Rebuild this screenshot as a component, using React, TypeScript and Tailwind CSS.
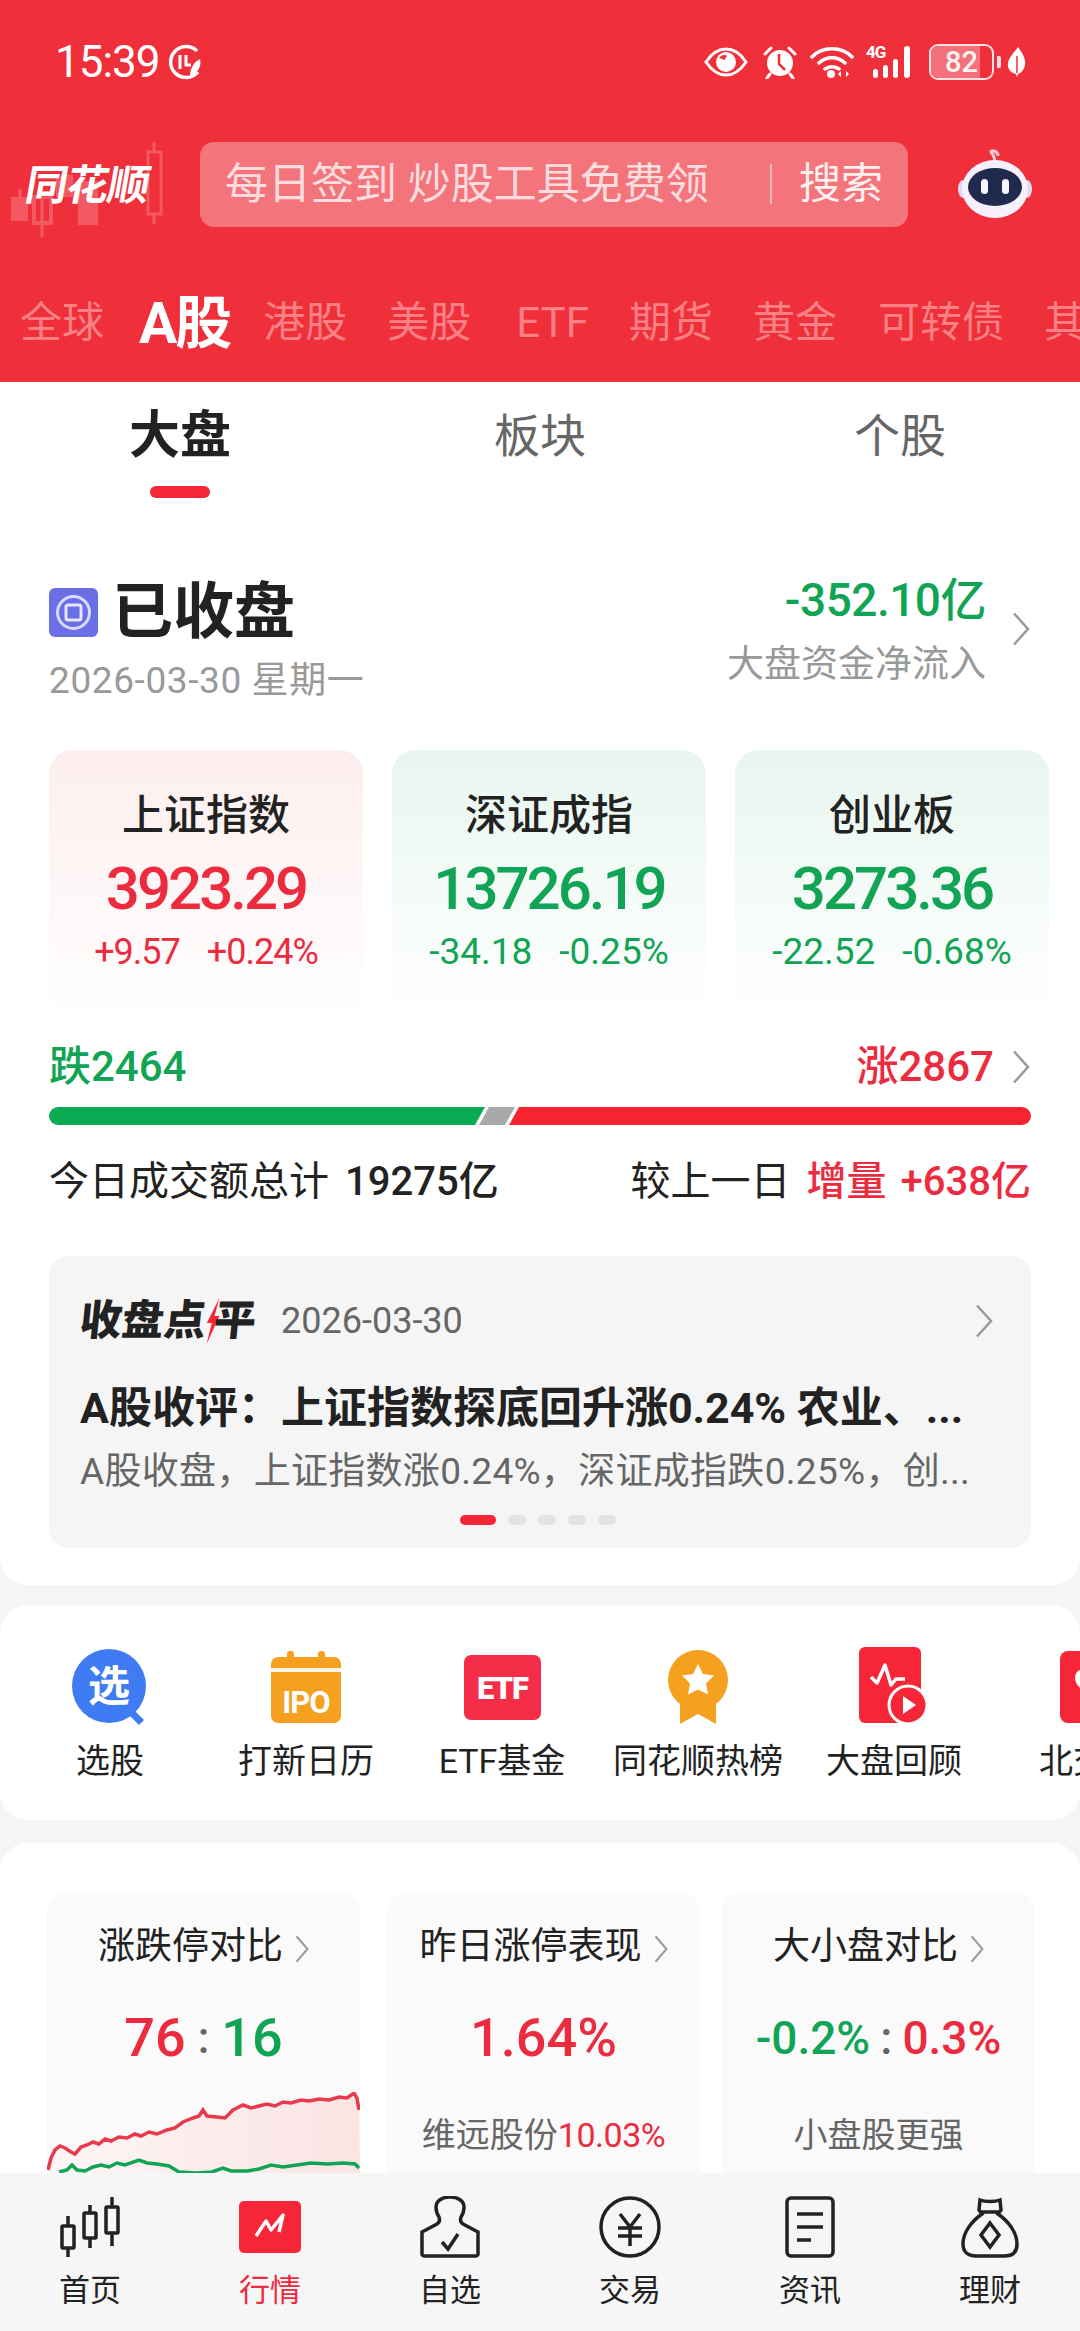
import React from "react";

const RED = "text-[#ec2b3f]";
const GREEN = "text-[#11a455]";

const marketTabs = [
  { label: "港股", cls: "" },
  { label: "美股", cls: "ml-[40px]" },
  { label: "ETF", cls: "ml-[45px]" },
  { label: "期货", cls: "ml-[40px]" },
  { label: "黄金", cls: "ml-[40px]" },
  { label: "可转债", cls: "ml-[41px]" },
  { label: "其他", cls: "ml-[40px]" },
];

const indexes = [
  { name: "上证指数", value: "3923.29", diff: "+9.57", pct: "+0.24%", up: true },
  { name: "深证成指", value: "13726.19", diff: "-34.18", pct: "-0.25%", up: false },
  { name: "创业板", value: "3273.36", diff: "-22.52", pct: "-0.68%", up: false },
];

// 截图里的箭头偏瘦偏高，lucide 的太宽，自己画
function Chevron({ w = 18, h = 34, className = "" }: { w?: number; h?: number; className?: string }) {
  return (
    <svg width={w} height={h} viewBox="0 0 18 34" preserveAspectRatio="none" fill="none" className={className}>
      <path d="M2 1.500 16 17 2 32.500" stroke="#9a9a9a" strokeWidth="2.500" />
    </svg>
  );
}

function Eye() {
  return (
    <svg width="44" height="30" viewBox="0 0 44 30" fill="none">
      <path d="M2 15C8 6 15 2 22 2s14 4 20 13c-6 9-13 13-20 13S8 24 2 15Z" stroke="#fff" strokeWidth="3" />
      <circle cx="22" cy="15" r="10" fill="#fff" />
      <path d="M15 11c2-3 6-4 8-2-1 1-2 2-2 4-2-1-4-1-6-2Z" fill="#ef2f3a" />
    </svg>
  );
}

function Alarm() {
  return (
    <svg width="36" height="34" viewBox="0 0 36 34" fill="none">
      <circle cx="18" cy="18" r="13" fill="#fff" />
      <path d="M3 9 9 3M33 9l-6-6M8 29l-3 4M28 29l3 4" stroke="#fff" strokeWidth="3" strokeLinecap="round" />
      <path d="M17 9v10l6 6" stroke="#ef2f3a" strokeWidth="2.500" />
    </svg>
  );
}

function Wifi() {
  return (
    <svg width="44" height="32" viewBox="0 0 44 32" fill="none">
      <path d="M2 11C12 0 32 0 42 11M9 17c7-7 19-7 26 0M15 23c4-3 10-3 14 0" stroke="#fff" strokeWidth="3.500" strokeLinecap="round" />
      <circle cx="21" cy="28" r="4" fill="#fff" />
      <path d="M31 25v6l-3-3ZM36 25v6l3-3Z" fill="#fff" />
    </svg>
  );
}

function Signal() {
  return (
    <div className="relative h-[34px] w-[50px]">
      <svg width="50" height="34" viewBox="0 0 50 34" fill="#fff">
        <rect x="7" y="24" width="5" height="9" rx="2.500" />
        <rect x="17" y="20" width="5" height="13" rx="2.500" />
        <rect x="27" y="14" width="5" height="19" rx="2.500" />
        <rect x="38" y="1" width="6" height="32" rx="3" />
      </svg>
      <span className="absolute left-0 top-[-3px] text-[17px] font-bold leading-[20px] tracking-[-1px] text-white">4G</span>
    </div>
  );
}

function Battery() {
  return (
    <div className="flex items-center gap-[3px]">
      <div className="relative flex h-[36px] w-[65px] items-center justify-center overflow-hidden rounded-[9px] border-[2px] border-[#fde3e4]">
        <div className="absolute inset-y-0 left-0 w-[80%] bg-[#f4707a]" />
        <span className="relative text-[29px] font-medium leading-none text-[#fff3f3]">82</span>
      </div>
      <div className="h-[12px] w-[4px] rounded-r-[2px] bg-[#fde3e4]" />
    </div>
  );
}

function Leaf() {
  return (
    <svg width="19" height="30" viewBox="0 0 19 30" fill="#fff" className="ml-[6px]">
      <path d="M11 0c5 7 8 12 7 18-1 5-4 8-7 9l-1 3-1-3C4 26 0 22 1 16 2 10 7 6 11 0Z" />
      <path d="M10 9v17" stroke="#ef2f3a" strokeWidth="1.500" />
    </svg>
  );
}

function Robot() {
  return (
    <svg width="76" height="70" viewBox="0 0 76 70" fill="none">
      <path d="M38 12c-1-5-2-8-5-9M33 3c3-3 8 0 8 4" stroke="#f7c9d3" strokeWidth="3" fill="none" />
      <ellipse cx="6" cy="40" rx="5" ry="9" fill="#dcd8f5" />
      <ellipse cx="70" cy="40" rx="5" ry="9" fill="#dcd8f5" />
      <ellipse cx="38" cy="40" rx="33" ry="29" fill="#f5f0fb" />
      <ellipse cx="38" cy="38" rx="27" ry="19" fill="#1f2a4d" />
      <rect x="24" y="30" width="7" height="15" rx="3.500" fill="#f5f5fb" />
      <rect x="45" y="30" width="7" height="15" rx="3.500" fill="#f5f5fb" />
    </svg>
  );
}

function Logo() {
  return (
    <div className="relative h-[120px] w-[188px] shrink-0">
      <svg width="188" height="120" viewBox="0 0 188 120" fill="none" className="absolute left-0 top-0 opacity-20">
        <rect x="11" y="72" width="17" height="24" fill="#fff" />
        <path d="M20 64v8M42 62v50" stroke="#fff" strokeWidth="3" />
        <rect x="34" y="72" width="17" height="26" stroke="#fff" strokeWidth="4" />
        <rect x="56" y="50" width="17" height="22" fill="#fff" />
        <rect x="78" y="56" width="20" height="44" fill="#fff" />
        <rect x="148" y="27" width="13" height="62" stroke="#fff" strokeWidth="3" />
        <path d="M154 17v10M154 89v10" stroke="#fff" strokeWidth="3" />
      </svg>
      <div className="absolute left-[26px] top-[37px] skew-x-[-10deg] text-[42px] font-bold leading-[48px] tracking-[-1px] text-white">同花顺</div>
    </div>
  );
}

function XuanIcon() {
  return (
    <svg width="76" height="78" viewBox="0 0 76 78">
      <path d="M58 58l14 14-5 5-14-14Z" fill="#3f7cf4" />
      <circle cx="37" cy="38" r="37" fill="#3f7cf4" />
      <text x="37" y="53" textAnchor="middle" fontSize="42" fontWeight="700" fill="#fff" fontFamily="'Noto Sans CJK SC', sans-serif">选</text>
    </svg>
  );
}

function IpoIcon() {
  return (
    <svg width="70" height="72" viewBox="0 0 70 72">
      <rect x="0" y="6" width="70" height="66" rx="7" fill="#f5a11f" />
      <rect x="16" y="0" width="7" height="12" rx="3" fill="#f5a11f" />
      <rect x="47" y="0" width="7" height="12" rx="3" fill="#f5a11f" />
      <rect x="0" y="17" width="70" height="4" fill="#fff" opacity="0.9" />
      <text x="35" y="62" textAnchor="middle" fontSize="31" fontWeight="700" letterSpacing="-1" fill="#fff" fontFamily="Roboto, sans-serif">IPO</text>
    </svg>
  );
}

function EtfIcon() {
  return (
    <svg width="77" height="65" viewBox="0 0 77 65">
      <rect width="77" height="65" rx="7" fill="#f62d48" />
      <text x="38.500" y="44" textAnchor="middle" fontSize="31" fontWeight="900" letterSpacing="-1" fill="#fff" fontFamily="Roboto, sans-serif">ETF</text>
    </svg>
  );
}

function MedalIcon() {
  return (
    <svg width="62" height="74" viewBox="0 0 62 74">
      <path d="M13 46v28l18-10 18 10V46Z" fill="#f5a11f" />
      <circle cx="31" cy="30" r="30" fill="#f5a11f" />
      <path d="m31 14 5 10 11 1.500-8 8 2 11-10-5-10 5 2-11-8-8 11-1.500Z" fill="#fff" />
    </svg>
  );
}

function ReviewIcon() {
  return (
    <svg width="70" height="80" viewBox="0 0 70 80">
      <rect width="62" height="76" rx="6" fill="#f62538" />
      <path d="M12 30l6 6 8-18 6 20 5-6h9" stroke="#fff" strokeWidth="3.500" fill="none" strokeLinejoin="round" />
      <circle cx="49" cy="58" r="19" fill="#f62538" stroke="#fff" strokeWidth="3" />
      <path d="M44 49l13 9-13 9Z" fill="#fff" />
    </svg>
  );
}

function BeiIcon() {
  return (
    <svg width="60" height="72" viewBox="0 0 60 72">
      <rect width="70" height="72" rx="8" fill="#f62538" />
      <path d="M30 22c5-6 15-4 15 5 0 7-8 13-15 19-7-6-15-12-15-19 0-9 10-11 15-5Z" fill="#fff" />
    </svg>
  );
}

const shortcuts = [
  { label: "选股", icon: <XuanIcon /> },
  { label: "打新日历", icon: <IpoIcon /> },
  { label: "ETF基金", icon: <EtfIcon /> },
  { label: "同花顺热榜", icon: <MedalIcon /> },
  { label: "大盘回顾", icon: <ReviewIcon /> },
  { label: "北交所", icon: <BeiIcon /> },
];

function NavIcon({ name }: { name: string }) {
  const stroke = { stroke: "#222", strokeWidth: 3.5, fill: "none" };
  if (name === "首页")
    return (
      <svg width="60" height="62" viewBox="0 0 60 62" {...stroke}>
        <rect x="2" y="30" width="12" height="22" rx="1" />
        <path d="M8 20v10M8 52v9" />
        <rect x="24" y="17" width="12" height="25" rx="1" />
        <path d="M30 9v8M30 42v10" />
        <rect x="46" y="11" width="12" height="26" rx="1" />
        <path d="M52 1v10M52 37v13" />
      </svg>
    );
  if (name === "行情")
    return (
      <svg width="62" height="62" viewBox="0 0 62 62">
        <rect y="5" width="62" height="52" rx="5" fill="#f62538" />
        <path d="M17 40 27 25l5 9 12-15-4 17" stroke="#fff" strokeWidth="3.500" fill="none" strokeLinejoin="round" />
      </svg>
    );
  if (name === "自选")
    return (
      <svg width="62" height="62" viewBox="0 0 62 62" {...stroke}>
        <path d="M3 36l15-8c3-2 3-4 2-7-2-3-3-6-3-10C17 5 23 1 31 1s14 4 14 10c0 4-1 7-3 10-1 3-1 5 2 7l15 8v22c0 1-1 2-2 2H5c-1 0-2-1-2-2Z" />
        <path d="M23 46l6 7 10-15" />
      </svg>
    );
  if (name === "交易")
    return (
      <svg width="62" height="62" viewBox="0 0 62 62" {...stroke}>
        <circle cx="31" cy="31" r="29" />
        <path d="M21 18l10 13 10-13M19 32h24M19 40h24M31 31v19" />
      </svg>
    );
  if (name === "资讯")
    return (
      <svg width="50" height="62" viewBox="0 0 50 62" {...stroke}>
        <rect x="2" y="2" width="46" height="58" rx="4" />
        <path d="M12 18h26M12 31h26M12 44h14" />
      </svg>
    );
  return (
    <svg width="58" height="62" viewBox="0 0 58 62" {...stroke}>
      <path d="M19 4c5 2 15 2 20 0l1 10-3 4c10 7 19 18 19 30 0 8-4 12-12 12H15C7 60 2 56 2 48c0-12 9-23 19-30l-3-4Z" />
      <path d="M20 16h18" />
      <path d="M29 27l9 12-9 12-9-12Z" />
    </svg>
  );
}

const navItems = ["首页", "行情", "自选", "交易", "资讯", "理财"];

// 涨停/跌停家数分时线，点位照截图描的
const redPoints = [
  [1, 78], [4, 66], [8, 58], [13, 54], [18, 56], [24, 60], [28, 62], [34, 55], [40, 53], [46, 50], [52, 52], [58, 47],
  [64, 49], [72, 45], [80, 46], [88, 42], [94, 44], [102, 40], [110, 42], [120, 38], [128, 36], [136, 30], [146, 26],
  [152, 24], [156, 18], [160, 24], [170, 25], [178, 26], [186, 18], [196, 13], [204, 16], [212, 14], [220, 12],
  [228, 14], [236, 10], [244, 11], [254, 8], [262, 9], [272, 7], [282, 8], [292, 5], [300, 6], [307, 1], [310, 6], [312, 18],
];
const greenPoints = [
  [12, 80], [20, 78], [25, 73], [30, 78], [38, 79], [46, 75], [54, 73], [62, 75], [70, 71], [78, 73], [92, 68], [100, 71],
  [110, 72], [122, 74], [132, 80], [150, 81], [165, 80], [176, 76], [184, 79], [200, 79], [212, 77], [224, 73], [236, 75],
  [250, 73], [264, 71], [280, 72], [296, 71], [308, 72], [312, 76],
];
const toLine = (pts: number[][]) => pts.map((p) => p.join(",")).join(" ");

function RatioChart() {
  return (
    <svg width="313" height="81" viewBox="0 0 313 81" className="mt-[22px] block">
      <defs>
        <linearGradient id="redFill" x1="0" y1="0" x2="1" y2="0">
          <stop offset="0" stopColor="#fdf5f5" />
          <stop offset="1" stopColor="#fbe4e4" />
        </linearGradient>
      </defs>
      <polygon points={`${toLine(redPoints)} 313,81 0,81`} fill="url(#redFill)" />
      <polyline points={toLine(redPoints)} fill="none" stroke="#e83a4c" strokeWidth="3.500" />
      <polyline points={toLine(greenPoints)} fill="none" stroke="#11a455" strokeWidth="3.500" />
    </svg>
  );
}

function MiniTitle({ text }: { text: string }) {
  return (
    <div className="flex h-[44px] items-center justify-center text-[37px] leading-[44px] text-[#222]">
      {text}
      <Chevron w={14} h={28} className="ml-[12px] mt-[4px]" />
    </div>
  );
}

export default function App() {
  return (
    <div
      className="flex h-[2331px] w-[1080px] flex-col overflow-hidden bg-[#f5f5f5]"
      style={{ fontFamily: "Roboto, 'Noto Sans CJK SC', sans-serif" }}
    >
      <header className="h-[382px] shrink-0 overflow-hidden bg-[#ef2f3a]">
        <div className="flex h-[124px] items-center pl-[55px] pr-[54px]">
          <span className="text-[44px] leading-none tracking-[-1px] text-[#fff]">15:39</span>
          <svg width="36" height="36" viewBox="0 0 36 36" fill="none" className="ml-[8px]">
            <path d="M29 7A15.500 15.500 0 1 0 30 28" stroke="#fff" strokeWidth="3.500" />
            <path d="M12 11v14M18 11v10h5" stroke="#fff" strokeWidth="3" />
            <path d="M32 15c2 8-3 15-10 17 0-8 4-14 10-17Z" fill="#fff" />
          </svg>
          <div className="ml-auto flex items-center">
            <Eye />
            <div className="ml-[14px]"><Alarm /></div>
            <div className="ml-[12px]"><Wifi /></div>
            <div className="ml-[12px]"><Signal /></div>
            <div className="ml-[13px]"><Battery /></div>
            <Leaf />
          </div>
        </div>
        <div className="flex h-[120px] items-center">
          <div className="mt-[2px]"><Logo /></div>
          <div className="ml-[12px] flex h-[85px] w-[708px] items-center rounded-[14px] bg-[#f4747c] pl-[25px] pr-[25px]">
            <span className="whitespace-pre text-[43px] leading-none text-[#fcdcde]">每日签到 炒股工具免费领</span>
            <div className="ml-auto h-[40px] w-[2px] bg-[#f9b8bc]" />
            <span className="ml-[27px] text-[42px] leading-none text-[#fff0f0]">搜索</span>
          </div>
          <div className="ml-[49px]"><Robot /></div>
        </div>
        <div className="mt-[44px] flex h-[70px] items-center whitespace-nowrap pl-[20px] text-[42px] leading-none text-[#fa8086]">
          <span>全球</span>
          <span className="ml-[35px] mr-[33px] text-[57px] font-bold tracking-[-2px] text-white">A股</span>
          {marketTabs.map((t) => (
            <span key={t.label} className={t.cls}>{t.label}</span>
          ))}
        </div>
      </header>

      <main className="min-h-0 flex-1 overflow-hidden">
        <section className="rounded-b-[28px] bg-white pb-[37px]">
          <div className="grid grid-cols-3 pt-[24px]">
            <div className="flex flex-col items-center">
              <div className="h-[60px] text-[51px] font-bold leading-[60px] text-[#222]">大盘</div>
              <div className="mt-[20px] h-[12px] w-[60px] rounded-full bg-[#f62538]" />
            </div>
            <div className="h-[60px] text-center text-[46px] leading-[60px] text-[#666]">板块</div>
            <div className="h-[60px] text-center text-[46px] leading-[60px] text-[#666]">个股</div>
          </div>

          <div className="flex justify-between pl-[49px] pr-[50px] pt-[79px]">
            <div>
              <div className="flex h-[70px] items-center">
                <svg width="49" height="49" viewBox="0 0 49 49">
                  <rect width="49" height="49" rx="6" fill="#6a6fe6" />
                  <circle cx="24.500" cy="24.500" r="16" fill="none" stroke="#d8dbff" strokeWidth="3" />
                  <rect x="17" y="17" width="15" height="15" rx="2" fill="none" stroke="#e4e6ff" strokeWidth="3" />
                </svg>
                <span className="ml-[14px] text-[61px] font-bold leading-[70px] text-[#222]">已收盘</span>
              </div>
              <div className="mt-[14px] h-[40px] text-[37px] leading-[40px] tracking-[0.6px] text-[#999]">2026-03-30 星期一</div>
            </div>
            <div className="flex items-start">
              <div className="flex flex-col items-end">
                <div className={`mt-[-2px] h-[50px] text-[46px] font-medium leading-[50px] tracking-[-0.5px] ${GREEN}`}>-352.10亿</div>
                <div className="mt-[18px] h-[44px] text-[37px] leading-[44px] text-[#999]">大盘资金净流入</div>
              </div>
              <Chevron className="ml-[26px] mt-[35px]" />
            </div>
          </div>

          <div className="mt-[49px] flex justify-between pl-[49px] pr-[31px]">
            {indexes.map((x) => (
              <div
                key={x.name}
                className={`flex h-[270px] w-[314px] flex-col items-center rounded-[24px] bg-gradient-to-b to-white pt-[41px] ${x.up ? "from-[#fdeeee]" : "from-[#e8f6ef]"}`}
              >
                <div className="h-[50px] text-[42px] font-medium leading-[50px] text-[#222]">{x.name}</div>
                <div className={`mt-[13px] h-[70px] text-[60px] font-medium leading-[70px] tracking-[-3px] ${x.up ? RED : GREEN}`}>{x.value}</div>
                <div className={`mt-[8px] flex h-[40px] gap-[27px] leading-[40px] ${x.up ? `text-[36px] tracking-[-1px] ${RED}` : `text-[37px] ${GREEN}`}`}>
                  <span>{x.diff}</span>
                  <span>{x.pct}</span>
                </div>
              </div>
            ))}
          </div>

          <div className="mx-[49px] mt-[22px] flex h-[50px] items-center text-[42px] font-medium leading-[50px]">
            <span className={GREEN}>跌2464</span>
            <span className={`ml-auto ${RED}`}>涨2867</span>
            <Chevron className="ml-[18px] mr-[1px]" />
          </div>

          <div className="mx-[49px] mt-[15px] flex h-[18px] w-[982px]">
            <div className="h-full w-[436px] rounded-l-[9px] bg-[#0aab52] [clip-path:polygon(0_0,100%_0,calc(100%-10px)_100%,0_100%)]" />
            <div className="ml-[-6px] h-full w-[36px] bg-[#a9a9a9] [clip-path:polygon(10px_0,100%_0,calc(100%-10px)_100%,0_100%)]" />
            <div className="ml-[-6px] h-full flex-1 rounded-r-[9px] bg-[#f5242f] [clip-path:polygon(10px_0,100%_0,100%_100%,0_100%)]" />
          </div>

          <div className="mx-[49px] mt-[32px] flex h-[50px] items-center text-[40px] leading-[50px] text-[#222]">
            <span>今日成交额总计</span>
            <span className="ml-[16px] font-medium">19275亿</span>
            <span className="ml-auto">较上一日</span>
            <span className={`ml-[16px] font-medium ${RED}`}>增量</span>
            <span className={`ml-[14px] font-medium ${RED}`}>+638亿</span>
          </div>

          <div className="mx-[49px] mt-[49px] h-[292px] w-[982px] rounded-[20px] bg-[#f5f5f5] px-[31px] pt-[40px]">
            <div className="flex h-[50px] items-center">
              <div className="flex skew-x-[-6deg] items-center text-[42px] font-black leading-[50px] text-[#222]">
                <span>收盘点</span>
                <svg width="14" height="46" viewBox="0 0 14 46">
                  <path d="M11 0 1 25h5L3 46l10-28H8Z" fill="#f62538" />
                </svg>
                <span className="ml-[-6px]">平</span>
              </div>
              <span className="ml-[25px] text-[36px] leading-[50px] text-[#666]">2026-03-30</span>
              <Chevron className="ml-auto mr-[7px]" />
            </div>
            <div className="mt-[37px] h-[50px] whitespace-nowrap text-[43px] font-bold leading-[50px] text-[#222]">A股收评：上证指数探底回升涨0.24% 农业、...</div>
            <div className="mt-[17px] h-[44px] whitespace-nowrap text-[37px] leading-[44px] tracking-[0.3px] text-[#666]">A股收盘，上证指数涨0.24%，深证成指跌0.25%，创...</div>
            <div className="mt-[21px] flex h-[10px] justify-center gap-[12px] pr-[4px]">
              <div className="h-[10px] w-[36px] rounded-full bg-[#f62538]" />
              <div className="h-[10px] w-[18px] rounded-full bg-[#e3e3e3]" />
              <div className="h-[10px] w-[18px] rounded-full bg-[#e3e3e3]" />
              <div className="h-[10px] w-[18px] rounded-full bg-[#e3e3e3]" />
              <div className="h-[10px] w-[18px] rounded-full bg-[#e3e3e3]" />
            </div>
          </div>
        </section>

        <section className="mt-[20px] flex h-[215px] overflow-hidden rounded-[28px] bg-white pl-[12px] pt-[42px]">
          {shortcuts.map((s) => (
            <div key={s.label} className="flex w-[196px] shrink-0 flex-col items-center">
              <div className="flex h-[80px] items-center justify-center">{s.icon}</div>
              <div className="mt-[14px] h-[40px] whitespace-nowrap text-[34px] leading-[40px] text-[#222]">{s.label}</div>
            </div>
          ))}
        </section>

        <section className="mt-[23px] flex h-[400px] rounded-t-[28px] bg-white pl-[47px] pt-[49px]">
          <div className="h-[281px] w-[313px] overflow-hidden rounded-t-[20px] bg-[#fafafa] pt-[33px]">
            <MiniTitle text="涨跌停对比" />
            <div className="mt-[37px] flex h-[64px] items-center justify-center gap-[12px] text-[54px] font-medium leading-[64px]">
              <span className={RED}>76</span>
              <span className="text-[44px] text-[#666]">:</span>
              <span className={GREEN}>16</span>
            </div>
            <RatioChart />
          </div>
          <div className="ml-[27px] h-[281px] w-[313px] overflow-hidden rounded-t-[20px] bg-[#fafafa] pt-[33px]">
            <MiniTitle text="昨日涨停表现" />
            <div className={`mt-[37px] h-[64px] text-center text-[54px] font-medium leading-[64px] ${RED}`}>1.64%</div>
            <div className="mt-[45px] h-[40px] text-center text-[34px] leading-[40px] text-[#666]">
              维远股份<span className={`tracking-[-0.5px] ${RED}`}>10.03%</span>
            </div>
          </div>
          <div className="ml-[22px] h-[281px] w-[313px] overflow-hidden rounded-t-[20px] bg-[#fafafa] pt-[33px]">
            <MiniTitle text="大小盘对比" />
            <div className="mt-[37px] flex h-[64px] items-center justify-center gap-[10px] text-[46px] font-medium leading-[64px]">
              <span className={GREEN}>-0.2%</span>
              <span className="text-[#666]">:</span>
              <span className={RED}>0.3%</span>
            </div>
            <div className="mt-[45px] h-[40px] text-center text-[34px] leading-[40px] text-[#666]">小盘股更强</div>
          </div>
        </section>
      </main>

      <nav className="grid h-[158px] shrink-0 grid-cols-6 bg-[#f6f6f6] pt-[23px]">
        {navItems.map((name) => (
          <div key={name} className="flex flex-col items-center">
            <div className="flex h-[62px] items-center justify-center">
              <NavIcon name={name} />
            </div>
            <div className={`mt-[13px] h-[40px] text-[31px] leading-[40px] ${name === "行情" ? RED : "text-[#222]"}`}>{name}</div>
          </div>
        ))}
      </nav>
    </div>
  );
}
